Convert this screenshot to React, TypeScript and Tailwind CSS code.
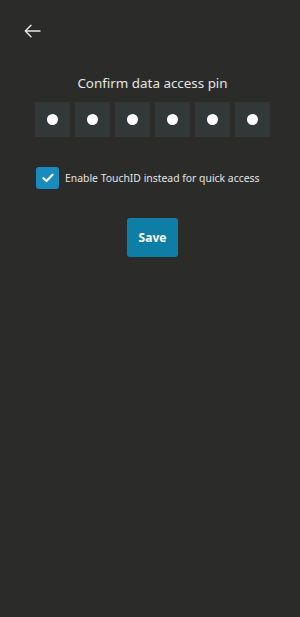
import React from 'react';

export default function App() {
  const pins = [0, 1, 2, 3, 4, 5];

  return (
    <div className="min-h-[617px] w-[300px] bg-[#2b2c2a] font-['Noto_Sans',sans-serif] text-[#e4e4e4]">
      <div className="px-[24px] pt-[24px]">
        <svg width="17" height="14" viewBox="0 0 17 14" fill="none" stroke="#e8e8e8" strokeWidth="1.4" strokeLinecap="round" strokeLinejoin="round">
          <path d="M16 7H1.5M7 1.3L1.3 7L7 12.7" />
        </svg>
      </div>

      <div className="mt-[35px] flex flex-col items-center pl-[5px]">
        <h1 className="text-[13.4px] leading-[20px]">Confirm data access pin</h1>

        <div className="mt-[9px] flex gap-[5px]">
          {pins.map((p) => (
            <div key={p} className="flex h-[35px] w-[35px] items-center justify-center bg-[#323737]">
              <span className="h-[11px] w-[11px] rounded-full bg-white" />
            </div>
          ))}
        </div>

        <label className="mt-[30px] flex w-[235px] items-center gap-[6px] pl-[1px]">
          <span className="flex h-[22px] w-[23px] items-center justify-center rounded-[3px] bg-[#1a8bbd]">
            <svg width="12" height="10" viewBox="0 0 12 10" fill="none" stroke="white" strokeWidth="2.2" strokeLinecap="round" strokeLinejoin="round">
              <path d="M1.5 5.2L4.5 8L10.5 1.8" />
            </svg>
          </span>
          <span className="text-[10.4px] leading-[16px]">Enable TouchID instead for quick access</span>
        </label>

        <button className="mt-[29px] h-[39px] w-[51px] rounded-[3px] bg-[#0e7ea7] text-[12px] font-bold text-white">
          Save
        </button>
      </div>
    </div>
  );
}
